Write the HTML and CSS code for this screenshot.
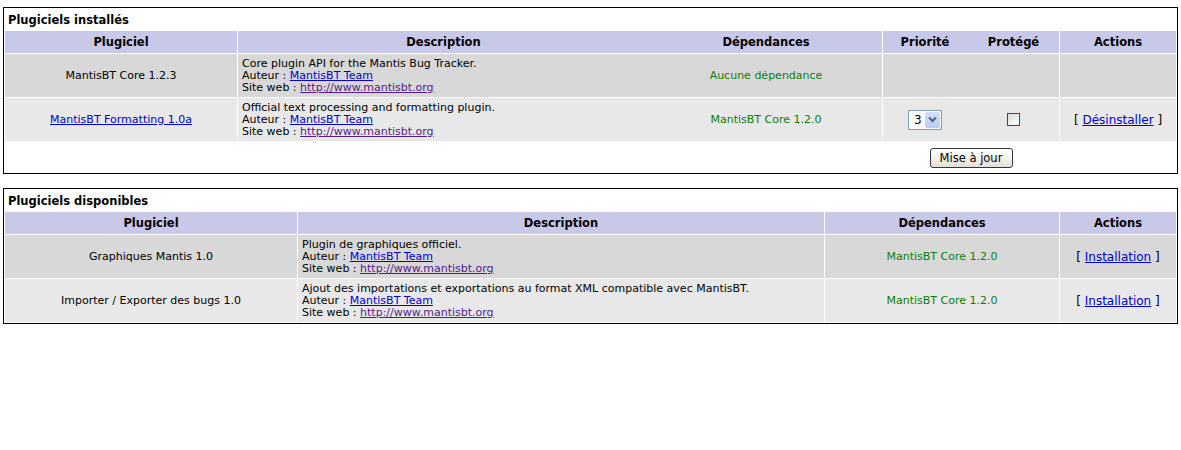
FILE: index.html
```html
<!DOCTYPE html>
<html lang="fr">
<head>
<meta charset="utf-8">
<title>Plugiciels</title>
<link rel="stylesheet" href="styles.css">
</head>
<body>
<table class="panel">
  <colgroup>
    <col class="w232"><col class="w411"><col class="w232"><col class="w84"><col class="w91"><col class="w116">
  </colgroup>
  <tr><td class="form-title" colspan="6">Plugiciels installés</td></tr>
  <tr class="row-category">
    <td>Plugiciel</td><td class="joined">Description</td><td>Dépendances</td><td class="joined">Priorité</td><td>Protégé</td><td>Actions</td>
  </tr>
  <tr class="row-1">
    <td class="center">MantisBT Core 1.2.3</td>
    <td class="joined">Core plugin API for the Mantis Bug Tracker.<br>Auteur : <a href="#">MantisBT Team</a><br>Site web : <a class="visited" href="#">http://www.mantisbt.org</a></td>
    <td class="center"><span class="dep">Aucune dépendance</span></td>
    <td class="joined"></td>
    <td></td>
    <td></td>
  </tr>
  <tr class="row-2">
    <td class="center"><a href="#">MantisBT Formatting 1.0a</a></td>
    <td class="joined">Official text processing and formatting plugin.<br>Auteur : <a href="#">MantisBT Team</a><br>Site web : <a class="visited" href="#">http://www.mantisbt.org</a></td>
    <td class="center"><span class="dep">MantisBT Core 1.2.0</span></td>
    <td class="joined center">
      <span class="select"><span class="select-val">3</span><span class="select-btn"><svg width="9" height="7" viewBox="0 0 9 7"><path d="M1 1.5l3.5 3.5L8 1.5" fill="none" stroke="#4d6185" stroke-width="2"/></svg></span></span>
    </td>
    <td class="center"><span class="checkbox"></span></td>
    <td class="center action">[ <a href="#">Désinstaller</a> ]</td>
  </tr>
  <tr class="row-buttons">
    <td colspan="3"></td>
    <td colspan="2" class="center btn-cell"><button class="btn" type="button">Mise à jour</button></td>
    <td></td>
  </tr>
</table>

<table class="panel">
  <colgroup>
    <col class="w292"><col class="w526"><col class="w234"><col class="w116">
  </colgroup>
  <tr><td class="form-title" colspan="4">Plugiciels disponibles</td></tr>
  <tr class="row-category">
    <td>Plugiciel</td><td>Description</td><td>Dépendances</td><td>Actions</td>
  </tr>
  <tr class="row-1">
    <td class="center">Graphiques Mantis 1.0</td>
    <td>Plugin de graphiques officiel.<br>Auteur : <a href="#">MantisBT Team</a><br>Site web : <a class="visited" href="#">http://www.mantisbt.org</a></td>
    <td class="center"><span class="dep">MantisBT Core 1.2.0</span></td>
    <td class="center action">[ <a href="#">Installation</a> ]</td>
  </tr>
  <tr class="row-2">
    <td class="center">Importer / Exporter des bugs 1.0</td>
    <td>Ajout des importations et exportations au format XML compatible avec MantisBT.<br>Auteur : <a href="#">MantisBT Team</a><br>Site web : <a class="visited" href="#">http://www.mantisbt.org</a></td>
    <td class="center"><span class="dep">MantisBT Core 1.2.0</span></td>
    <td class="center action">[ <a href="#">Installation</a> ]</td>
  </tr>
</table>
</body>
</html>
```

FILE: styles.css
```css
html, body {
  margin: 0;
  padding: 0;
  background: #ffffff;
}

body {
  padding: 7px 3px 0 3px;
  font-family: "DejaVu Sans", Verdana, sans-serif;
  font-size: 11px;
  color: #000000;
}

.panel {
  width: 100%;
  border: 1px solid #000000;
  border-collapse: separate;
  border-spacing: 1px;
  table-layout: fixed;
}

.panel + .panel {
  margin-top: 14px;
}

.w232 { width: 232px; }
.w411 { width: 411px; }
.w84 { width: 84px; }
.w91 { width: 91px; }
.w116 { width: 116px; }
.w292 { width: 292px; }
.w526 { width: 526px; }
.w234 { width: 234px; }

.panel td {
  padding: 0 4px;
  line-height: 12px;
  vertical-align: middle;
  text-align: left;
  white-space: nowrap;
  overflow: hidden;
}

.panel td.form-title {
  height: 20px;
  padding-left: 3px;
  padding-top: 1px;
  font-weight: bold;
  font-size: 11.5px;
  background: #ffffff;
}

.row-category {
  --bg: #c8c8e8;
}

.row-1 {
  --bg: #d8d8d8;
}

.row-2 {
  --bg: #e8e8e8;
}

.row-category td {
  height: 22px;
  background: var(--bg);
  font-weight: bold;
  font-size: 11.5px;
}

.panel .row-category td {
  text-align: center;
}

.row-1 td,
.row-2 td {
  height: 43px;
  background: var(--bg);
}

.panel td.joined {
  box-shadow: 1px 0 0 var(--bg);
}

.row-buttons td {
  height: 30px;
}

.panel td.btn-cell {
  padding-top: 2px;
  height: 28px;
}

.panel td.center {
  text-align: center;
}

a {
  color: #0000cc;
  text-decoration: underline;
}

a.visited {
  color: #551a8b;
}

.dep {
  color: #0a7f0a;
}

.panel td.action {
  font-size: 12px;
  line-height: 14px;
}

.select {
  display: inline-flex;
  align-items: center;
  width: 34px;
  height: 20px;
  box-sizing: border-box;
  border: 1px solid #7f9db9;
  background: #ffffff;
  vertical-align: middle;
  padding: 1px;
}

.select-val {
  flex: 1;
  padding-left: 4px;
  font-size: 12px;
  line-height: 16px;
  text-align: left;
}

.select-btn {
  display: flex;
  align-items: center;
  justify-content: center;
  width: 15px;
  height: 16px;
  background: linear-gradient(#d3e0fd, #b8cdf8);
  border-radius: 2px;
}

.checkbox {
  display: inline-block;
  width: 13px;
  height: 13px;
  box-sizing: border-box;
  border: 1px solid #1c5180;
  background: linear-gradient(135deg, #dcdcd5, #ffffff);
  vertical-align: middle;
}

.btn {
  width: 83px;
  height: 20px;
  padding: 0;
  border: 1px solid #2e3a46;
  border-radius: 3px;
  background: linear-gradient(#ffffff, #f4f4f0 50%, #e0ded5);
  font-family: "DejaVu Sans", Tahoma, sans-serif;
  font-size: 11.5px;
  color: #000000;
  vertical-align: middle;
}
```
